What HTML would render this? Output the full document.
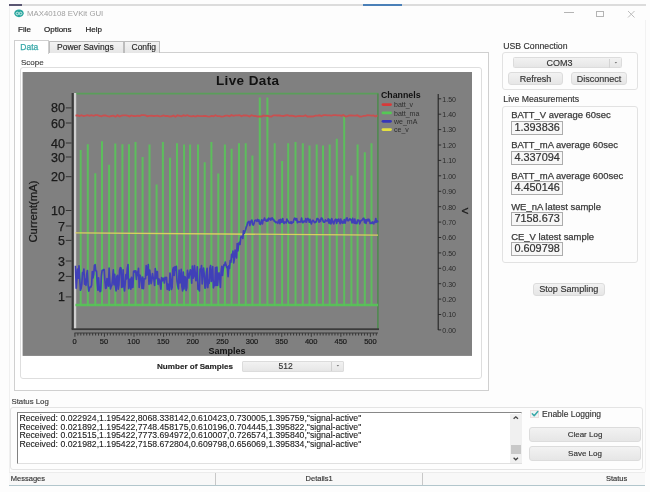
<!DOCTYPE html>
<html><head><meta charset="utf-8">
<style>
html,body{margin:0;padding:0;}
body{width:650px;height:492px;overflow:hidden;background:#fdfdfd;position:relative;font-family:"Liberation Sans",sans-serif;color:#333;}
.a{position:absolute;white-space:nowrap;}
.t{position:absolute;white-space:nowrap;line-height:1;}
.btn{position:absolute;box-sizing:border-box;border:1px solid #dcdcdc;border-radius:3px;background:linear-gradient(#f2f2f2,#e6e6e6);font-size:9px;color:#333;text-align:center;-webkit-text-stroke:0.15px #333;}
.grp{position:absolute;box-sizing:border-box;border:1px solid #e2e2e2;border-radius:3px;}
.val{position:absolute;box-sizing:border-box;border:1.6px solid #acacac;background:#f7f7f7;font-size:10.9px;color:#333;-webkit-text-stroke:0.2px #333;padding-left:2.2px;line-height:11px;}
body>*{filter:blur(0.3px);}
</style></head><body>
<!-- top strip -->
<div class="a" style="left:9px;top:4px;width:637px;height:1.5px;background:#dcdcdc"></div>
<div class="a" style="left:9px;top:4px;width:13px;height:1.6px;background:#5a5672"></div>
<div class="a" style="left:362.7px;top:4px;width:39px;height:1.6px;background:#4a80b8"></div>
<!-- title -->
<svg class="a" style="left:12px;top:7px" width="14" height="13"><ellipse cx="7" cy="6.3" rx="4.7" ry="3.9" fill="#2ba79f"/><circle cx="5.4" cy="6.5" r="1.3" fill="none" stroke="#d8f0ee" stroke-width="0.9"/><circle cx="8.6" cy="6.5" r="1.3" fill="none" stroke="#d8f0ee" stroke-width="0.9"/></svg>
<div class="t" style="left:27px;top:10.2px;font-size:7.8px;color:#a0a0a0">MAX40108 EVKit GUI</div>
<div class="a" style="left:564px;top:12.3px;width:10px;height:1px;background:#b4b4b4"></div>
<div class="a" style="left:596px;top:11px;width:7.5px;height:5.5px;box-sizing:border-box;border:1px solid #b4b4b4"></div>
<svg class="a" style="left:620px;top:5px" width="20" height="20"><path d="M8,6 L14.5,12.5 M14.5,6 L8,12.5" stroke="#bcbcbc" stroke-width="1"/></svg>
<!-- menu -->
<div class="t" style="left:18px;top:25.5px;font-size:8px;color:#222;-webkit-text-stroke:0.2px #222">File</div>
<div class="t" style="left:44px;top:25.5px;font-size:8px;color:#222;-webkit-text-stroke:0.2px #222">Options</div>
<div class="t" style="left:85.5px;top:25.5px;font-size:8px;color:#222;-webkit-text-stroke:0.2px #222">Help</div>
<!-- tab panel -->
<div class="a" style="left:13.5px;top:52.3px;width:475px;height:338.5px;box-sizing:border-box;border:1px solid #d0d0d0;background:#fff"></div>
<div class="a" style="left:48.6px;top:41.2px;width:75.4px;height:11.4px;box-sizing:border-box;border:1px solid #bdbdbd;border-bottom:none;background:linear-gradient(#f3f3f3,#e6e6e6)"></div>
<div class="a" style="left:123.6px;top:41.2px;width:36.5px;height:11.4px;box-sizing:border-box;border:1px solid #bdbdbd;border-bottom:none;background:linear-gradient(#f3f3f3,#e6e6e6)"></div>
<div class="a" style="left:13.5px;top:40px;width:35.5px;height:13.5px;box-sizing:border-box;border:1px solid #cfcfcf;border-bottom:none;background:#fff"></div>
<div class="t" style="left:20.3px;top:42.8px;font-size:8.5px;color:#38a8a8;-webkit-text-stroke:0.25px #38a8a8">Data</div>
<div class="t" style="left:57px;top:43px;font-size:8.5px;color:#222;-webkit-text-stroke:0.15px #333">Power Savings</div>
<div class="t" style="left:131.5px;top:43px;font-size:8.5px;color:#222;-webkit-text-stroke:0.15px #333">Config</div>
<div class="t" style="left:21px;top:59px;font-size:8px;color:#444;-webkit-text-stroke:0.15px #333">Scope</div>
<div class="grp" style="left:19.5px;top:67.4px;width:462.5px;height:312.1px;border-color:#dedede"></div>
<!-- number of samples -->
<div class="t" style="left:157px;top:363px;font-size:8.1px;font-weight:bold;color:#222;-webkit-text-stroke:0.15px #333">Number of Samples</div>
<div class="btn" style="left:242px;top:361px;width:102px;height:10.5px;border-radius:1px"></div>
<div class="a" style="left:331px;top:362px;width:1px;height:8.5px;background:#d0d0d0"></div>
<div class="t" style="left:278.5px;top:362.3px;font-size:8.5px;color:#333;-webkit-text-stroke:0.15px #333">512</div>
<svg class="a" style="left:334px;top:363px" width="8" height="6"><path d="M2.6,2 L5.2,2 L3.9,3.6 Z" fill="#777"/></svg>

<!-- chart -->
<svg class="a" style="left:0;top:0" width="650" height="492" viewBox="0 0 650 492" font-family="Liberation Sans, sans-serif">
<rect x="22.6" y="72" width="449.4" height="283.9" fill="#808080"/>
<line x1="75" y1="93.6" x2="378.5" y2="93.6" stroke="#5a9e5a" stroke-width="1.6"/>
<line x1="377.9" y1="93.5" x2="377.9" y2="329" stroke="#4f8a4f" stroke-width="1.6"/>
<rect x="71.6" y="93" width="2.3" height="236" fill="#3a3a3a"/>
<rect x="73.9" y="93" width="2.3" height="236" fill="#cfcfcf"/>
<rect x="71.6" y="328.3" width="307.4" height="1.8" fill="#3a3a3a"/>
<line x1="65.8" y1="107.9" x2="71.5" y2="107.9" stroke="#333" stroke-width="1"/>
<text x="65" y="108.4" text-anchor="end" font-size="12.5" fill="#1a1a1a" stroke="#1a1a1a" stroke-width="0.25" dominant-baseline="central">80</text>
<line x1="65.8" y1="123.0" x2="71.5" y2="123.0" stroke="#333" stroke-width="1"/>
<text x="65" y="123.5" text-anchor="end" font-size="12.5" fill="#1a1a1a" stroke="#1a1a1a" stroke-width="0.25" dominant-baseline="central">60</text>
<line x1="65.8" y1="143.0" x2="71.5" y2="143.0" stroke="#333" stroke-width="1"/>
<text x="65" y="143.5" text-anchor="end" font-size="12.5" fill="#1a1a1a" stroke="#1a1a1a" stroke-width="0.25" dominant-baseline="central">40</text>
<line x1="65.8" y1="157.0" x2="71.5" y2="157.0" stroke="#333" stroke-width="1"/>
<text x="65" y="157.5" text-anchor="end" font-size="12.5" fill="#1a1a1a" stroke="#1a1a1a" stroke-width="0.25" dominant-baseline="central">30</text>
<line x1="65.8" y1="176.7" x2="71.5" y2="176.7" stroke="#333" stroke-width="1"/>
<text x="65" y="177.2" text-anchor="end" font-size="12.5" fill="#1a1a1a" stroke="#1a1a1a" stroke-width="0.25" dominant-baseline="central">20</text>
<line x1="65.8" y1="210.5" x2="71.5" y2="210.5" stroke="#333" stroke-width="1"/>
<text x="65" y="211.0" text-anchor="end" font-size="12.5" fill="#1a1a1a" stroke="#1a1a1a" stroke-width="0.25" dominant-baseline="central">10</text>
<line x1="65.8" y1="226.0" x2="71.5" y2="226.0" stroke="#333" stroke-width="1"/>
<text x="65" y="226.5" text-anchor="end" font-size="12.5" fill="#1a1a1a" stroke="#1a1a1a" stroke-width="0.25" dominant-baseline="central">7</text>
<line x1="65.8" y1="240.4" x2="71.5" y2="240.4" stroke="#333" stroke-width="1"/>
<text x="65" y="240.9" text-anchor="end" font-size="12.5" fill="#1a1a1a" stroke="#1a1a1a" stroke-width="0.25" dominant-baseline="central">5</text>
<line x1="65.8" y1="261.0" x2="71.5" y2="261.0" stroke="#333" stroke-width="1"/>
<text x="65" y="261.5" text-anchor="end" font-size="12.5" fill="#1a1a1a" stroke="#1a1a1a" stroke-width="0.25" dominant-baseline="central">3</text>
<line x1="65.8" y1="276.4" x2="71.5" y2="276.4" stroke="#333" stroke-width="1"/>
<text x="65" y="276.9" text-anchor="end" font-size="12.5" fill="#1a1a1a" stroke="#1a1a1a" stroke-width="0.25" dominant-baseline="central">2</text>
<line x1="65.8" y1="296.9" x2="71.5" y2="296.9" stroke="#333" stroke-width="1"/>
<text x="65" y="297.4" text-anchor="end" font-size="12.5" fill="#1a1a1a" stroke="#1a1a1a" stroke-width="0.25" dominant-baseline="central">1</text>
<line x1="74.5" y1="333" x2="378" y2="333" stroke="#3a3a3a" stroke-width="1.1"/>
<line x1="74.90" y1="333" x2="74.90" y2="336.8" stroke="#3a3a3a" stroke-width="1.1"/>
<line x1="77.86" y1="333" x2="77.86" y2="335.6" stroke="#3a3a3a" stroke-width="1.1"/>
<line x1="80.81" y1="333" x2="80.81" y2="335.6" stroke="#3a3a3a" stroke-width="1.1"/>
<line x1="83.77" y1="333" x2="83.77" y2="335.6" stroke="#3a3a3a" stroke-width="1.1"/>
<line x1="86.72" y1="333" x2="86.72" y2="335.6" stroke="#3a3a3a" stroke-width="1.1"/>
<line x1="89.67" y1="333" x2="89.67" y2="335.6" stroke="#3a3a3a" stroke-width="1.1"/>
<line x1="92.63" y1="333" x2="92.63" y2="335.6" stroke="#3a3a3a" stroke-width="1.1"/>
<line x1="95.58" y1="333" x2="95.58" y2="335.6" stroke="#3a3a3a" stroke-width="1.1"/>
<line x1="98.54" y1="333" x2="98.54" y2="335.6" stroke="#3a3a3a" stroke-width="1.1"/>
<line x1="101.49" y1="333" x2="101.49" y2="335.6" stroke="#3a3a3a" stroke-width="1.1"/>
<line x1="104.45" y1="333" x2="104.45" y2="336.8" stroke="#3a3a3a" stroke-width="1.1"/>
<line x1="107.40" y1="333" x2="107.40" y2="335.6" stroke="#3a3a3a" stroke-width="1.1"/>
<line x1="110.36" y1="333" x2="110.36" y2="335.6" stroke="#3a3a3a" stroke-width="1.1"/>
<line x1="113.31" y1="333" x2="113.31" y2="335.6" stroke="#3a3a3a" stroke-width="1.1"/>
<line x1="116.27" y1="333" x2="116.27" y2="335.6" stroke="#3a3a3a" stroke-width="1.1"/>
<line x1="119.22" y1="333" x2="119.22" y2="335.6" stroke="#3a3a3a" stroke-width="1.1"/>
<line x1="122.18" y1="333" x2="122.18" y2="335.6" stroke="#3a3a3a" stroke-width="1.1"/>
<line x1="125.13" y1="333" x2="125.13" y2="335.6" stroke="#3a3a3a" stroke-width="1.1"/>
<line x1="128.09" y1="333" x2="128.09" y2="335.6" stroke="#3a3a3a" stroke-width="1.1"/>
<line x1="131.04" y1="333" x2="131.04" y2="335.6" stroke="#3a3a3a" stroke-width="1.1"/>
<line x1="134.00" y1="333" x2="134.00" y2="336.8" stroke="#3a3a3a" stroke-width="1.1"/>
<line x1="136.96" y1="333" x2="136.96" y2="335.6" stroke="#3a3a3a" stroke-width="1.1"/>
<line x1="139.91" y1="333" x2="139.91" y2="335.6" stroke="#3a3a3a" stroke-width="1.1"/>
<line x1="142.87" y1="333" x2="142.87" y2="335.6" stroke="#3a3a3a" stroke-width="1.1"/>
<line x1="145.82" y1="333" x2="145.82" y2="335.6" stroke="#3a3a3a" stroke-width="1.1"/>
<line x1="148.78" y1="333" x2="148.78" y2="335.6" stroke="#3a3a3a" stroke-width="1.1"/>
<line x1="151.73" y1="333" x2="151.73" y2="335.6" stroke="#3a3a3a" stroke-width="1.1"/>
<line x1="154.69" y1="333" x2="154.69" y2="335.6" stroke="#3a3a3a" stroke-width="1.1"/>
<line x1="157.64" y1="333" x2="157.64" y2="335.6" stroke="#3a3a3a" stroke-width="1.1"/>
<line x1="160.60" y1="333" x2="160.60" y2="335.6" stroke="#3a3a3a" stroke-width="1.1"/>
<line x1="163.55" y1="333" x2="163.55" y2="336.8" stroke="#3a3a3a" stroke-width="1.1"/>
<line x1="166.51" y1="333" x2="166.51" y2="335.6" stroke="#3a3a3a" stroke-width="1.1"/>
<line x1="169.46" y1="333" x2="169.46" y2="335.6" stroke="#3a3a3a" stroke-width="1.1"/>
<line x1="172.42" y1="333" x2="172.42" y2="335.6" stroke="#3a3a3a" stroke-width="1.1"/>
<line x1="175.37" y1="333" x2="175.37" y2="335.6" stroke="#3a3a3a" stroke-width="1.1"/>
<line x1="178.33" y1="333" x2="178.33" y2="335.6" stroke="#3a3a3a" stroke-width="1.1"/>
<line x1="181.28" y1="333" x2="181.28" y2="335.6" stroke="#3a3a3a" stroke-width="1.1"/>
<line x1="184.24" y1="333" x2="184.24" y2="335.6" stroke="#3a3a3a" stroke-width="1.1"/>
<line x1="187.19" y1="333" x2="187.19" y2="335.6" stroke="#3a3a3a" stroke-width="1.1"/>
<line x1="190.15" y1="333" x2="190.15" y2="335.6" stroke="#3a3a3a" stroke-width="1.1"/>
<line x1="193.10" y1="333" x2="193.10" y2="336.8" stroke="#3a3a3a" stroke-width="1.1"/>
<line x1="196.06" y1="333" x2="196.06" y2="335.6" stroke="#3a3a3a" stroke-width="1.1"/>
<line x1="199.01" y1="333" x2="199.01" y2="335.6" stroke="#3a3a3a" stroke-width="1.1"/>
<line x1="201.97" y1="333" x2="201.97" y2="335.6" stroke="#3a3a3a" stroke-width="1.1"/>
<line x1="204.92" y1="333" x2="204.92" y2="335.6" stroke="#3a3a3a" stroke-width="1.1"/>
<line x1="207.88" y1="333" x2="207.88" y2="335.6" stroke="#3a3a3a" stroke-width="1.1"/>
<line x1="210.83" y1="333" x2="210.83" y2="335.6" stroke="#3a3a3a" stroke-width="1.1"/>
<line x1="213.79" y1="333" x2="213.79" y2="335.6" stroke="#3a3a3a" stroke-width="1.1"/>
<line x1="216.74" y1="333" x2="216.74" y2="335.6" stroke="#3a3a3a" stroke-width="1.1"/>
<line x1="219.70" y1="333" x2="219.70" y2="335.6" stroke="#3a3a3a" stroke-width="1.1"/>
<line x1="222.65" y1="333" x2="222.65" y2="336.8" stroke="#3a3a3a" stroke-width="1.1"/>
<line x1="225.61" y1="333" x2="225.61" y2="335.6" stroke="#3a3a3a" stroke-width="1.1"/>
<line x1="228.56" y1="333" x2="228.56" y2="335.6" stroke="#3a3a3a" stroke-width="1.1"/>
<line x1="231.52" y1="333" x2="231.52" y2="335.6" stroke="#3a3a3a" stroke-width="1.1"/>
<line x1="234.47" y1="333" x2="234.47" y2="335.6" stroke="#3a3a3a" stroke-width="1.1"/>
<line x1="237.43" y1="333" x2="237.43" y2="335.6" stroke="#3a3a3a" stroke-width="1.1"/>
<line x1="240.38" y1="333" x2="240.38" y2="335.6" stroke="#3a3a3a" stroke-width="1.1"/>
<line x1="243.34" y1="333" x2="243.34" y2="335.6" stroke="#3a3a3a" stroke-width="1.1"/>
<line x1="246.29" y1="333" x2="246.29" y2="335.6" stroke="#3a3a3a" stroke-width="1.1"/>
<line x1="249.25" y1="333" x2="249.25" y2="335.6" stroke="#3a3a3a" stroke-width="1.1"/>
<line x1="252.20" y1="333" x2="252.20" y2="336.8" stroke="#3a3a3a" stroke-width="1.1"/>
<line x1="255.16" y1="333" x2="255.16" y2="335.6" stroke="#3a3a3a" stroke-width="1.1"/>
<line x1="258.11" y1="333" x2="258.11" y2="335.6" stroke="#3a3a3a" stroke-width="1.1"/>
<line x1="261.07" y1="333" x2="261.07" y2="335.6" stroke="#3a3a3a" stroke-width="1.1"/>
<line x1="264.02" y1="333" x2="264.02" y2="335.6" stroke="#3a3a3a" stroke-width="1.1"/>
<line x1="266.98" y1="333" x2="266.98" y2="335.6" stroke="#3a3a3a" stroke-width="1.1"/>
<line x1="269.93" y1="333" x2="269.93" y2="335.6" stroke="#3a3a3a" stroke-width="1.1"/>
<line x1="272.89" y1="333" x2="272.89" y2="335.6" stroke="#3a3a3a" stroke-width="1.1"/>
<line x1="275.84" y1="333" x2="275.84" y2="335.6" stroke="#3a3a3a" stroke-width="1.1"/>
<line x1="278.80" y1="333" x2="278.80" y2="335.6" stroke="#3a3a3a" stroke-width="1.1"/>
<line x1="281.75" y1="333" x2="281.75" y2="336.8" stroke="#3a3a3a" stroke-width="1.1"/>
<line x1="284.71" y1="333" x2="284.71" y2="335.6" stroke="#3a3a3a" stroke-width="1.1"/>
<line x1="287.66" y1="333" x2="287.66" y2="335.6" stroke="#3a3a3a" stroke-width="1.1"/>
<line x1="290.62" y1="333" x2="290.62" y2="335.6" stroke="#3a3a3a" stroke-width="1.1"/>
<line x1="293.57" y1="333" x2="293.57" y2="335.6" stroke="#3a3a3a" stroke-width="1.1"/>
<line x1="296.53" y1="333" x2="296.53" y2="335.6" stroke="#3a3a3a" stroke-width="1.1"/>
<line x1="299.48" y1="333" x2="299.48" y2="335.6" stroke="#3a3a3a" stroke-width="1.1"/>
<line x1="302.44" y1="333" x2="302.44" y2="335.6" stroke="#3a3a3a" stroke-width="1.1"/>
<line x1="305.39" y1="333" x2="305.39" y2="335.6" stroke="#3a3a3a" stroke-width="1.1"/>
<line x1="308.35" y1="333" x2="308.35" y2="335.6" stroke="#3a3a3a" stroke-width="1.1"/>
<line x1="311.30" y1="333" x2="311.30" y2="336.8" stroke="#3a3a3a" stroke-width="1.1"/>
<line x1="314.26" y1="333" x2="314.26" y2="335.6" stroke="#3a3a3a" stroke-width="1.1"/>
<line x1="317.21" y1="333" x2="317.21" y2="335.6" stroke="#3a3a3a" stroke-width="1.1"/>
<line x1="320.17" y1="333" x2="320.17" y2="335.6" stroke="#3a3a3a" stroke-width="1.1"/>
<line x1="323.12" y1="333" x2="323.12" y2="335.6" stroke="#3a3a3a" stroke-width="1.1"/>
<line x1="326.08" y1="333" x2="326.08" y2="335.6" stroke="#3a3a3a" stroke-width="1.1"/>
<line x1="329.03" y1="333" x2="329.03" y2="335.6" stroke="#3a3a3a" stroke-width="1.1"/>
<line x1="331.99" y1="333" x2="331.99" y2="335.6" stroke="#3a3a3a" stroke-width="1.1"/>
<line x1="334.94" y1="333" x2="334.94" y2="335.6" stroke="#3a3a3a" stroke-width="1.1"/>
<line x1="337.90" y1="333" x2="337.90" y2="335.6" stroke="#3a3a3a" stroke-width="1.1"/>
<line x1="340.85" y1="333" x2="340.85" y2="336.8" stroke="#3a3a3a" stroke-width="1.1"/>
<line x1="343.81" y1="333" x2="343.81" y2="335.6" stroke="#3a3a3a" stroke-width="1.1"/>
<line x1="346.76" y1="333" x2="346.76" y2="335.6" stroke="#3a3a3a" stroke-width="1.1"/>
<line x1="349.72" y1="333" x2="349.72" y2="335.6" stroke="#3a3a3a" stroke-width="1.1"/>
<line x1="352.67" y1="333" x2="352.67" y2="335.6" stroke="#3a3a3a" stroke-width="1.1"/>
<line x1="355.62" y1="333" x2="355.62" y2="335.6" stroke="#3a3a3a" stroke-width="1.1"/>
<line x1="358.58" y1="333" x2="358.58" y2="335.6" stroke="#3a3a3a" stroke-width="1.1"/>
<line x1="361.53" y1="333" x2="361.53" y2="335.6" stroke="#3a3a3a" stroke-width="1.1"/>
<line x1="364.49" y1="333" x2="364.49" y2="335.6" stroke="#3a3a3a" stroke-width="1.1"/>
<line x1="367.44" y1="333" x2="367.44" y2="335.6" stroke="#3a3a3a" stroke-width="1.1"/>
<line x1="370.40" y1="333" x2="370.40" y2="336.8" stroke="#3a3a3a" stroke-width="1.1"/>
<line x1="373.35" y1="333" x2="373.35" y2="335.6" stroke="#3a3a3a" stroke-width="1.1"/>
<line x1="376.31" y1="333" x2="376.31" y2="335.6" stroke="#3a3a3a" stroke-width="1.1"/>
<text x="74.6" y="341.5" text-anchor="middle" font-size="7.5" fill="#1a1a1a" stroke="#1a1a1a" stroke-width="0.2" dominant-baseline="central">0</text>
<text x="104.0" y="341.5" text-anchor="middle" font-size="7.5" fill="#1a1a1a" stroke="#1a1a1a" stroke-width="0.2" dominant-baseline="central">50</text>
<text x="133.6" y="341.5" text-anchor="middle" font-size="7.5" fill="#1a1a1a" stroke="#1a1a1a" stroke-width="0.2" dominant-baseline="central">100</text>
<text x="163.2" y="341.5" text-anchor="middle" font-size="7.5" fill="#1a1a1a" stroke="#1a1a1a" stroke-width="0.2" dominant-baseline="central">150</text>
<text x="192.8" y="341.5" text-anchor="middle" font-size="7.5" fill="#1a1a1a" stroke="#1a1a1a" stroke-width="0.2" dominant-baseline="central">200</text>
<text x="222.4" y="341.5" text-anchor="middle" font-size="7.5" fill="#1a1a1a" stroke="#1a1a1a" stroke-width="0.2" dominant-baseline="central">250</text>
<text x="252.0" y="341.5" text-anchor="middle" font-size="7.5" fill="#1a1a1a" stroke="#1a1a1a" stroke-width="0.2" dominant-baseline="central">300</text>
<text x="281.6" y="341.5" text-anchor="middle" font-size="7.5" fill="#1a1a1a" stroke="#1a1a1a" stroke-width="0.2" dominant-baseline="central">350</text>
<text x="311.2" y="341.5" text-anchor="middle" font-size="7.5" fill="#1a1a1a" stroke="#1a1a1a" stroke-width="0.2" dominant-baseline="central">400</text>
<text x="340.8" y="341.5" text-anchor="middle" font-size="7.5" fill="#1a1a1a" stroke="#1a1a1a" stroke-width="0.2" dominant-baseline="central">450</text>
<text x="370.4" y="341.5" text-anchor="middle" font-size="7.5" fill="#1a1a1a" stroke="#1a1a1a" stroke-width="0.2" dominant-baseline="central">500</text>
<text x="227" y="350.8" text-anchor="middle" font-size="9" font-weight="bold" fill="#111" dominant-baseline="central">Samples</text>
<text x="247.7" y="80.5" text-anchor="middle" font-size="13.5" font-weight="bold" fill="#111" letter-spacing="0.4" dominant-baseline="central">Live Data</text>
<text transform="translate(33.2,211.5) rotate(-90)" text-anchor="middle" font-size="11.3" fill="#1a1a1a" stroke="#1a1a1a" stroke-width="0.25" dominant-baseline="central">Current(mA)</text>
<line x1="438.2" y1="94" x2="438.2" y2="330" stroke="#222" stroke-width="1.1"/>
<line x1="438.2" y1="98.8" x2="441.2" y2="98.8" stroke="#222" stroke-width="0.9"/>
<text x="442.3" y="99.1" font-size="7" fill="#2a2a2a" dominant-baseline="central">1.50</text>
<line x1="438.2" y1="114.2" x2="441.2" y2="114.2" stroke="#222" stroke-width="0.9"/>
<text x="442.3" y="114.5" font-size="7" fill="#2a2a2a" dominant-baseline="central">1.40</text>
<line x1="438.2" y1="129.6" x2="441.2" y2="129.6" stroke="#222" stroke-width="0.9"/>
<text x="442.3" y="129.9" font-size="7" fill="#2a2a2a" dominant-baseline="central">1.30</text>
<line x1="438.2" y1="145.0" x2="441.2" y2="145.0" stroke="#222" stroke-width="0.9"/>
<text x="442.3" y="145.3" font-size="7" fill="#2a2a2a" dominant-baseline="central">1.20</text>
<line x1="438.2" y1="160.4" x2="441.2" y2="160.4" stroke="#222" stroke-width="0.9"/>
<text x="442.3" y="160.7" font-size="7" fill="#2a2a2a" dominant-baseline="central">1.10</text>
<line x1="438.2" y1="175.8" x2="441.2" y2="175.8" stroke="#222" stroke-width="0.9"/>
<text x="442.3" y="176.2" font-size="7" fill="#2a2a2a" dominant-baseline="central">1.00</text>
<line x1="438.2" y1="191.3" x2="441.2" y2="191.3" stroke="#222" stroke-width="0.9"/>
<text x="442.3" y="191.6" font-size="7" fill="#2a2a2a" dominant-baseline="central">0.90</text>
<line x1="438.2" y1="206.7" x2="441.2" y2="206.7" stroke="#222" stroke-width="0.9"/>
<text x="442.3" y="207.0" font-size="7" fill="#2a2a2a" dominant-baseline="central">0.80</text>
<line x1="438.2" y1="222.1" x2="441.2" y2="222.1" stroke="#222" stroke-width="0.9"/>
<text x="442.3" y="222.4" font-size="7" fill="#2a2a2a" dominant-baseline="central">0.70</text>
<line x1="438.2" y1="237.5" x2="441.2" y2="237.5" stroke="#222" stroke-width="0.9"/>
<text x="442.3" y="237.8" font-size="7" fill="#2a2a2a" dominant-baseline="central">0.60</text>
<line x1="438.2" y1="252.9" x2="441.2" y2="252.9" stroke="#222" stroke-width="0.9"/>
<text x="442.3" y="253.2" font-size="7" fill="#2a2a2a" dominant-baseline="central">0.50</text>
<line x1="438.2" y1="268.3" x2="441.2" y2="268.3" stroke="#222" stroke-width="0.9"/>
<text x="442.3" y="268.6" font-size="7" fill="#2a2a2a" dominant-baseline="central">0.40</text>
<line x1="438.2" y1="283.7" x2="441.2" y2="283.7" stroke="#222" stroke-width="0.9"/>
<text x="442.3" y="284.0" font-size="7" fill="#2a2a2a" dominant-baseline="central">0.30</text>
<line x1="438.2" y1="299.1" x2="441.2" y2="299.1" stroke="#222" stroke-width="0.9"/>
<text x="442.3" y="299.4" font-size="7" fill="#2a2a2a" dominant-baseline="central">0.20</text>
<line x1="438.2" y1="314.5" x2="441.2" y2="314.5" stroke="#222" stroke-width="0.9"/>
<text x="442.3" y="314.8" font-size="7" fill="#2a2a2a" dominant-baseline="central">0.10</text>
<line x1="438.2" y1="329.9" x2="441.2" y2="329.9" stroke="#222" stroke-width="0.9"/>
<text x="442.3" y="330.2" font-size="7" fill="#2a2a2a" dominant-baseline="central">0.00</text>
<text transform="translate(465,211) rotate(90)" text-anchor="middle" font-size="9.5" fill="#1a1a1a" stroke="#1a1a1a" stroke-width="0.3" dominant-baseline="central">V</text>
<text x="381" y="95.3" font-size="8.8" font-weight="bold" fill="#111" dominant-baseline="central">Channels</text>
<line x1="383" y1="104.6" x2="390.5" y2="104.6" stroke="#d83a3a" stroke-width="2.8" stroke-linecap="round"/>
<text x="394" y="104.8" font-size="7" fill="#2e2e2e" dominant-baseline="central">batt_v</text>
<line x1="383" y1="112.9" x2="390.5" y2="112.9" stroke="#55c855" stroke-width="2.8" stroke-linecap="round"/>
<text x="394" y="113.1" font-size="7" fill="#2e2e2e" dominant-baseline="central">batt_ma</text>
<line x1="383" y1="121.3" x2="390.5" y2="121.3" stroke="#3636b8" stroke-width="2.8" stroke-linecap="round"/>
<text x="394" y="121.5" font-size="7" fill="#2e2e2e" dominant-baseline="central">we_mA</text>
<line x1="383" y1="129.6" x2="390.5" y2="129.6" stroke="#e4e040" stroke-width="2.8" stroke-linecap="round"/>
<text x="394" y="129.8" font-size="7" fill="#2e2e2e" dominant-baseline="central">ce_v</text>
<line x1="75.5" y1="305.0" x2="378.0" y2="305.0" stroke="#58c058" stroke-width="2.4"/>
<path d="M80.7,305.8 L80.7,149.9 M87.8,305.8 L87.8,144.2 M95.3,305.8 L95.3,173.3 M102.0,305.8 L102.0,141.3 M109.1,305.8 L109.1,164.8 M115.3,305.8 L115.3,143.5 M122.4,305.8 L122.4,144.2 M129.0,305.8 L129.0,144.2 M135.5,305.8 L135.5,142.0 M142.6,305.8 L142.6,157.0 M149.5,305.8 L149.5,144.4 M156.6,305.8 L156.6,184.5 M162.9,305.8 L162.9,142.1 M170.0,305.8 L170.0,157.8 M177.0,305.8 L177.0,143.2 M184.1,305.8 L184.1,144.4 M190.1,305.8 L190.1,144.4 M198.0,305.8 L198.0,144.4 M204.7,305.8 L204.7,162.2 M211.4,305.8 L211.4,142.1 M218.3,305.8 L218.3,173.5 M224.9,305.8 L224.9,144.4 M231.6,305.8 L231.6,148.8 M239.0,305.8 L239.0,143.2 M245.7,305.8 L245.7,143.2 M252.4,305.8 L252.4,155.5 M259.8,305.8 L259.8,97.5 M267.4,305.8 L267.4,97.5 M274.7,305.8 L274.7,143.2 M282.1,305.8 L282.1,161.1 M288.2,305.8 L288.2,143.2 M295.5,305.8 L295.5,142.1 M302.8,305.8 L302.8,143.3 M309.5,305.8 L309.5,145.5 M316.7,305.8 L316.7,144.5 M323.0,305.8 L323.0,145.5 M329.7,305.8 L329.7,144.5 M336.8,305.8 L336.8,138.8 M344.2,305.8 L344.2,116.5 M351.4,305.8 L351.4,175.5 M357.6,305.8 L357.6,144.5 M364.8,305.8 L364.8,152.3 M371.5,305.8 L371.5,143.3 " fill="none" stroke="#5cbe5c" stroke-width="2.0"/>
<path d="M75.5,115.6 L77.5,115.3 L79.5,116.1 L81.5,115.2 L83.5,116.0 L85.5,115.7 L87.5,115.2 L89.5,115.9 L91.5,115.2 L93.5,115.8 L95.5,115.2 L97.5,115.2 L99.5,115.8 L101.5,116.4 L103.5,115.3 L105.5,115.5 L107.5,116.1 L109.5,116.6 L111.5,116.0 L113.5,115.7 L115.5,116.7 L117.5,115.2 L119.5,116.5 L121.5,115.6 L123.5,115.3 L125.5,115.3 L127.5,115.6 L129.5,116.4 L131.5,115.4 L133.5,116.0 L135.5,116.1 L137.5,115.7 L139.5,116.0 L141.5,115.2 L143.5,115.2 L145.5,115.4 L147.5,116.2 L149.5,115.8 L151.5,115.6 L153.5,116.0 L155.5,115.8 L157.5,115.6 L159.5,116.4 L161.5,116.2 L163.5,115.5 L165.5,116.0 L167.5,115.9 L169.5,116.5 L171.5,116.3 L173.5,115.6 L175.5,116.7 L177.5,115.3 L179.5,115.8 L181.5,116.3 L183.5,115.3 L185.5,115.9 L187.5,115.2 L189.5,116.2 L191.5,116.3 L193.5,116.0 L195.5,116.5 L197.5,115.6 L199.5,116.2 L201.5,116.1 L203.5,116.0 L205.5,115.8 L207.5,116.4 L209.5,116.6 L211.5,115.9 L213.5,116.2 L215.5,115.2 L217.5,116.2 L219.5,116.1 L221.5,116.7 L223.5,116.4 L225.5,115.6 L227.5,115.7 L229.5,116.2 L231.5,115.1 L233.5,115.8 L235.5,115.4 L237.5,115.3 L239.5,115.2 L241.5,116.3 L243.5,115.3 L245.5,115.5 L247.5,115.7 L249.5,116.5 L251.5,115.2 L253.5,115.8 L255.5,116.0 L257.5,116.5 L259.5,116.4 L261.5,116.5 L263.5,115.5 L265.5,115.8 L267.5,115.7 L269.5,116.5 L271.5,116.6 L273.5,115.3 L275.5,115.4 L277.5,115.5 L279.5,115.5 L281.5,115.9 L283.5,116.0 L285.5,115.5 L287.5,115.1 L289.5,115.8 L291.5,115.7 L293.5,116.0 L295.5,116.6 L297.5,116.2 L299.5,115.9 L301.5,116.1 L303.5,116.2 L305.5,115.2 L307.5,116.5 L309.5,116.3 L311.5,116.5 L313.5,116.4 L315.5,115.7 L317.5,115.7 L319.5,115.3 L321.5,116.1 L323.5,115.2 L325.5,115.2 L327.5,115.4 L329.5,115.4 L331.5,115.6 L333.5,115.2 L335.5,115.1 L337.5,115.3 L339.5,115.3 L341.5,115.7 L343.5,115.1 L345.5,116.5 L347.5,116.1 L349.5,115.3 L351.5,115.5 L353.5,115.7 L355.5,115.7 L357.5,115.3 L359.5,116.5 L361.5,116.7 L363.5,115.8 L365.5,115.9 L367.5,115.2 L369.5,115.3 L371.5,115.6 L373.5,115.5 L375.5,116.4 L377.5,115.4" fill="none" stroke="#c85050" stroke-width="1.8"/>
<path d="M75.5,232.8 L378.0,235.2" fill="none" stroke="#d8d060" stroke-width="1.3"/>
<path d="M75.5,265.8 L76.2,288.3 L76.9,279.8 L77.6,269.1 L78.3,278.2 L79.0,265.9 L79.7,277.5 L80.4,290.2 L81.1,288.5 L81.8,284.1 L82.5,272.5 L83.2,274.0 L83.9,269.1 L84.6,284.1 L85.3,279.4 L86.0,285.3 L86.7,274.4 L87.4,270.5 L88.1,285.2 L88.8,291.1 L89.5,288.3 L90.2,286.9 L90.9,287.0 L91.6,285.0 L92.3,271.7 L93.0,277.8 L93.7,274.3 L94.4,265.6 L95.1,264.7 L95.8,271.0 L96.5,271.1 L97.2,282.2 L97.9,290.1 L98.6,277.9 L99.3,289.2 L100.0,291.6 L100.7,291.0 L101.4,275.8 L102.1,270.6 L102.8,270.3 L103.5,269.5 L104.2,269.6 L104.9,280.3 L105.6,288.5 L106.3,287.8 L107.0,278.5 L107.7,282.0 L108.4,286.1 L109.1,268.2 L109.8,281.1 L110.5,288.8 L111.2,286.3 L111.9,285.2 L112.6,278.2 L113.3,269.8 L114.0,284.6 L114.7,274.4 L115.4,285.3 L116.1,290.8 L116.8,276.6 L117.5,275.3 L118.2,289.2 L118.9,284.9 L119.6,270.2 L120.3,267.7 L121.0,268.0 L121.7,287.4 L122.4,286.8 L123.1,269.8 L123.8,285.5 L124.5,291.0 L125.2,283.3 L125.9,274.7 L126.6,278.9 L127.3,268.6 L128.0,264.6 L128.7,288.7 L129.4,282.9 L130.1,279.2 L130.8,289.2 L131.5,277.4 L132.2,287.5 L132.9,287.3 L133.6,271.5 L134.3,271.0 L135.0,272.0 L135.7,270.8 L136.4,279.5 L137.1,272.0 L137.8,275.3 L138.5,268.3 L139.2,287.5 L139.9,275.2 L140.6,276.6 L141.3,280.0 L142.0,288.5 L142.7,277.0 L143.4,288.6 L144.1,279.1 L144.8,278.9 L145.5,278.7 L146.2,265.7 L146.9,275.2 L147.6,269.6 L148.3,264.5 L149.0,284.3 L149.7,270.2 L150.4,276.5 L151.1,283.6 L151.8,280.0 L152.5,273.7 L153.2,278.0 L153.9,279.4 L154.6,285.4 L155.3,268.7 L156.0,278.6 L156.7,271.6 L157.4,271.7 L158.1,284.3 L158.8,278.8 L159.5,279.7 L160.2,284.8 L160.9,289.2 L161.6,277.7 L162.3,280.8 L163.0,278.4 L163.7,278.4 L164.4,283.0 L165.1,277.3 L165.8,278.8 L166.5,277.5 L167.2,289.3 L167.9,284.2 L168.6,288.3 L169.3,290.3 L170.0,273.1 L170.7,279.0 L171.4,289.5 L172.1,287.8 L172.8,269.7 L173.5,267.5 L174.2,275.5 L174.9,266.8 L175.6,270.2 L176.3,266.3 L177.0,281.2 L177.7,285.6 L178.4,288.9 L179.1,270.2 L179.8,282.8 L180.5,282.6 L181.2,269.3 L181.9,286.9 L182.6,290.9 L183.3,272.1 L184.0,289.0 L184.7,276.5 L185.4,277.5 L186.1,290.5 L186.8,287.8 L187.5,270.3 L188.2,275.5 L188.9,278.1 L189.6,273.9 L190.3,269.8 L191.0,272.5 L191.7,283.1 L192.4,266.2 L193.1,278.2 L193.8,276.5 L194.5,265.5 L195.2,272.4 L195.9,280.6 L196.6,278.6 L197.3,266.9 L198.0,289.3 L198.7,286.5 L199.4,290.9 L200.1,269.2 L200.8,271.1 L201.5,265.5 L202.2,283.9 L202.9,272.7 L203.6,268.0 L204.3,275.0 L205.0,288.2 L205.7,287.1 L206.4,272.7 L207.1,268.4 L207.8,287.7 L208.5,280.7 L209.2,283.3 L209.9,267.9 L210.6,265.5 L211.3,281.4 L212.0,276.2 L212.7,266.7 L213.4,287.8 L214.1,282.1 L214.8,285.7 L215.5,267.7 L216.2,285.5 L216.9,267.2 L217.6,285.4 L218.3,276.8 L219.0,272.9 L219.7,277.7 L220.4,287.4 L221.1,271.7 L221.8,266.4 L222.5,275.5 L223.2,269.0 L223.9,264.8 L224.6,265.3 L225.3,262.2 L226.0,265.1 L226.7,267.4 L227.4,266.9 L228.1,276.6 L228.8,265.8 L229.5,268.5 L230.2,260.6 L230.9,262.3 L231.6,254.3 L232.3,257.0 L233.0,251.2 L233.7,262.9 L234.4,258.8 L235.1,250.0 L235.8,252.3 L236.5,258.0 L237.2,243.5 L237.9,250.8 L238.6,244.0 L239.3,242.3 L240.0,244.5 L240.7,237.6 L241.4,236.6 L242.1,236.9 L242.8,238.4 L243.5,230.9 L244.2,233.5 L244.9,231.5 L245.6,229.7 L246.3,226.8 L247.0,225.3 L247.7,222.4 L248.4,222.2 L249.1,221.3 L249.8,225.5 L250.5,222.2 L251.2,221.0 L251.9,220.1 L252.6,224.6 L253.3,225.0 L254.0,223.6 L254.7,220.9 L255.4,220.2 L256.1,220.4 L256.8,221.3 L257.5,219.5 L258.2,221.0 L258.9,220.0 L259.6,223.9 L260.3,224.4 L261.0,221.9 L261.7,219.8 L262.4,223.8 L263.1,220.3 L263.8,220.2 L264.5,218.1 L265.2,220.1 L265.9,220.8 L266.6,221.1 L267.3,219.3 L268.0,220.9 L268.7,218.2 L269.4,219.4 L270.1,218.5 L270.8,220.2 L271.5,218.3 L272.2,218.0 L272.9,219.6 L273.6,219.3 L274.3,221.3 L275.0,221.2 L275.7,222.5 L276.4,222.1 L277.1,222.4 L277.8,223.3 L278.5,220.6 L279.2,220.0 L279.9,223.7 L280.6,219.3 L281.3,222.1 L282.0,221.9 L282.7,218.5 L283.4,222.7 L284.1,223.4 L284.8,222.0 L285.5,222.4 L286.2,222.9 L286.9,219.1 L287.6,220.9 L288.3,221.0 L289.0,222.9 L289.7,222.9 L290.4,223.1 L291.1,221.7 L291.8,223.3 L292.5,222.3 L293.2,222.2 L293.9,219.6 L294.6,218.2 L295.3,218.6 L296.0,220.0 L296.7,218.6 L297.4,222.7 L298.1,221.5 L298.8,221.8 L299.5,221.8 L300.2,222.1 L300.9,221.1 L301.6,218.1 L302.3,222.4 L303.0,222.6 L303.7,221.2 L304.4,221.2 L305.1,221.9 L305.8,218.6 L306.5,222.1 L307.2,219.7 L307.9,218.4 L308.6,219.4 L309.3,222.2 L310.0,219.4 L310.7,222.2 L311.4,223.9 L312.1,221.3 L312.8,220.3 L313.5,220.8 L314.2,222.0 L314.9,222.6 L315.6,221.8 L316.3,221.9 L317.0,218.7 L317.7,218.7 L318.4,219.4 L319.1,222.2 L319.8,220.0 L320.5,221.3 L321.2,218.2 L321.9,218.2 L322.6,219.4 L323.3,221.8 L324.0,222.2 L324.7,222.1 L325.4,219.9 L326.1,221.0 L326.8,220.8 L327.5,220.8 L328.2,218.8 L328.9,223.0 L329.6,219.5 L330.3,223.6 L331.0,223.8 L331.7,218.5 L332.4,220.5 L333.1,222.8 L333.8,223.9 L334.5,221.0 L335.2,219.7 L335.9,219.2 L336.6,223.4 L337.3,219.6 L338.0,221.3 L338.7,219.0 L339.4,220.9 L340.1,223.6 L340.8,219.1 L341.5,222.7 L342.2,221.2 L342.9,223.2 L343.6,222.4 L344.3,219.6 L345.0,223.2 L345.7,221.1 L346.4,218.3 L347.1,217.9 L347.8,220.6 L348.5,220.7 L349.2,219.8 L349.9,218.8 L350.6,219.9 L351.3,219.8 L352.0,222.8 L352.7,218.3 L353.4,222.2 L354.1,223.1 L354.8,219.0 L355.5,223.3 L356.2,222.5 L356.9,223.5 L357.6,220.0 L358.3,220.2 L359.0,220.3 L359.7,223.8 L360.4,221.8 L361.1,220.3 L361.8,220.5 L362.5,219.7 L363.2,218.3 L363.9,218.4 L364.6,222.7 L365.3,219.9 L366.0,223.4 L366.7,219.8 L367.4,219.5 L368.1,220.9 L368.8,219.2 L369.5,220.1 L370.2,223.5 L370.9,223.5 L371.6,223.0 L372.3,222.0 L373.0,223.5 L373.7,223.8 L374.4,221.6 L375.1,222.3 L375.8,218.5 L376.5,222.1 L377.2,220.8 L377.9,222.4" fill="none" stroke="#4040b8" stroke-width="1.7" stroke-linejoin="round"/>
</svg>

<!-- right panel -->
<div class="t" style="left:503.3px;top:42.2px;font-size:8.7px;color:#333;-webkit-text-stroke:0.15px #333">USB Connection</div>
<div class="grp" style="left:502px;top:52.2px;width:136px;height:38px"></div>
<div class="btn" style="left:513px;top:57.3px;width:108.5px;height:11.2px;border-radius:1.5px"></div>
<div class="a" style="left:609px;top:58.5px;width:1px;height:9px;background:#d4d4d4"></div>
<div class="t" style="left:546.5px;top:58.6px;font-size:9px;color:#333;-webkit-text-stroke:0.15px #333">COM3</div>
<svg class="a" style="left:612px;top:60px" width="8" height="6"><path d="M2.6,2 L5.2,2 L3.9,3.6 Z" fill="#777"/></svg>
<div class="btn" style="left:508px;top:72px;width:55px;height:13px;line-height:12px">Refresh</div>
<div class="btn" style="left:571.3px;top:72px;width:55.6px;height:13px;line-height:12px">Disconnect</div>

<div class="t" style="left:503.3px;top:95.3px;font-size:8.7px;color:#333;-webkit-text-stroke:0.15px #333">Live Measurements</div>
<div class="grp" style="left:502px;top:106.2px;width:135.6px;height:157px"></div>
<div class="t" style="left:511.2px;top:109.8px;font-size:9.45px;color:#3a3a3a;-webkit-text-stroke:0.25px #3a3a3a">BATT_V average 60sec</div>
<div class="val" style="left:511.2px;top:120.9px;width:51.8px;height:14px">1.393836</div>
<div class="t" style="left:511.2px;top:140.3px;font-size:9.45px;color:#3a3a3a;-webkit-text-stroke:0.25px #3a3a3a">BATT_mA average 60sec</div>
<div class="val" style="left:511.2px;top:150.7px;width:51.8px;height:14px">4.337094</div>
<div class="t" style="left:511.2px;top:170.6px;font-size:9.45px;color:#3a3a3a;-webkit-text-stroke:0.25px #3a3a3a">BATT_mA average 600sec</div>
<div class="val" style="left:511.2px;top:181.2px;width:51.8px;height:14px">4.450146</div>
<div class="t" style="left:511.2px;top:201.5px;font-size:9.45px;color:#3a3a3a;-webkit-text-stroke:0.25px #3a3a3a">WE_nA latest sample</div>
<div class="val" style="left:511.2px;top:212.1px;width:51.8px;height:14px">7158.673</div>
<div class="t" style="left:511.2px;top:232.3px;font-size:9.45px;color:#3a3a3a;-webkit-text-stroke:0.25px #3a3a3a">CE_V latest sample</div>
<div class="val" style="left:511.2px;top:242.3px;width:51.8px;height:14px">0.609798</div>
<div class="btn" style="left:532.8px;top:283px;width:72px;height:12.8px;line-height:11.3px;font-size:9.1px">Stop Sampling</div>

<!-- status log -->
<div class="t" style="left:11.5px;top:397.5px;font-size:7.8px;color:#444;-webkit-text-stroke:0.15px #333">Status Log</div>
<div class="grp" style="left:9.7px;top:407px;width:633.5px;height:62.5px;border-color:#e4e4e4"></div>
<div class="a" style="left:17px;top:412px;width:505px;height:51.5px;box-sizing:border-box;border-left:1.5px solid #808080;border-top:1.5px solid #888;border-right:1px solid #e0e0e0;border-bottom:1px solid #e0e0e0;background:#fff"></div>
<div class="a" style="left:510px;top:413.5px;width:11.5px;height:49px;background:#f0f0f0"></div>
<div class="a" style="left:511px;top:445px;width:9.5px;height:9px;background:#c8c8c8"></div>
<svg class="a" style="left:510px;top:413px" width="12" height="50"><path d="M3.6,5.8 L5.8,3.8 L8,5.8" fill="none" stroke="#444" stroke-width="1.3"/><path d="M3.6,44.8 L5.8,46.8 L8,44.8" fill="none" stroke="#444" stroke-width="1.3"/></svg>
<div class="t" style="left:19.4px;top:413.8px;font-size:8.7px;line-height:8.7px;color:#222;-webkit-text-stroke:0.12px #222">Received: 0.022924,1.195422,8068.338142,0.610423,0.730005,1.395759,"signal-active"<br>Received: 0.021892,1.195422,7748.458175,0.610196,0.704445,1.395822,"signal-active"<br>Received: 0.021515,1.195422,7773.694972,0.610007,0.726574,1.395840,"signal-active"<br>Received: 0.021982,1.195422,7158.672804,0.609798,0.656069,1.395834,"signal-active"</div>
<div class="a" style="left:529.5px;top:409.5px;width:9.5px;height:8.5px;box-sizing:border-box;border:1px solid #ecdede;background:#eef4f4"></div>
<svg class="a" style="left:529px;top:408px" width="12" height="12"><path d="M3.3,5.8 L5.2,7.8 L8.8,3.6" fill="none" stroke="#3aa8a8" stroke-width="1.5" stroke-linecap="round" stroke-linejoin="round"/></svg>
<div class="t" style="left:542px;top:409.5px;font-size:8.5px;color:#333;-webkit-text-stroke:0.15px #333">Enable Logging</div>
<div class="btn" style="left:529px;top:426.5px;width:112px;height:15px;line-height:14px;font-size:8px">Clear Log</div>
<div class="btn" style="left:529px;top:446px;width:112px;height:15px;line-height:14px;font-size:8px">Save Log</div>

<!-- status bar -->
<div class="a" style="left:9px;top:472px;width:636px;height:14px;background:#f8f8f8;border-top:1px solid #ececec;box-sizing:border-box"></div>
<div class="a" style="left:9px;top:6px;width:1px;height:466px;background:#f0f0f0"></div>
<div class="a" style="left:644.5px;top:20px;width:1px;height:452px;background:#f2f2f2"></div>
<div class="a" style="left:9px;top:485.3px;width:636px;height:1.2px;background:#b2c6cc"></div>
<div class="a" style="left:214.5px;top:472.5px;width:1px;height:12px;background:#c8c8c8"></div>
<div class="a" style="left:422px;top:472.5px;width:1px;height:12px;background:#c8c8c8"></div>
<div class="t" style="left:10.8px;top:474.8px;font-size:7.5px;color:#333;-webkit-text-stroke:0.15px #333">Messages</div>
<div class="t" style="left:305.6px;top:474.8px;font-size:7.5px;color:#333;-webkit-text-stroke:0.15px #333">Details1</div>
<div class="t" style="left:606px;top:474.8px;font-size:7.5px;color:#333;-webkit-text-stroke:0.15px #333">Status</div>
</body></html>
